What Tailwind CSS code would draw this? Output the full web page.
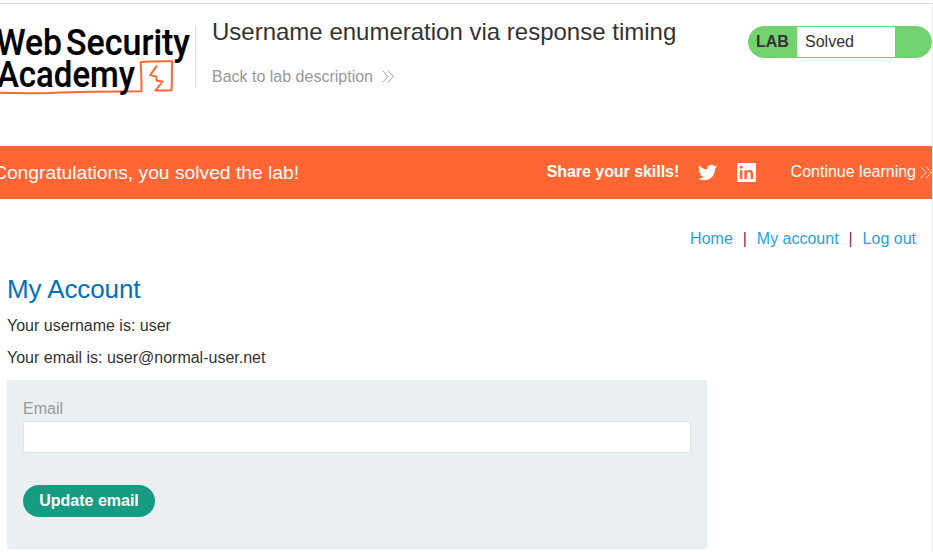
<!DOCTYPE html>
<html lang="en">
<head>
<meta charset="utf-8">
<title>Username enumeration via response timing</title>
<script src="https://cdn.jsdelivr.net/npm/@tailwindcss/browser@4"></script>
</head>
<body class="h-[552px] w-[933px] overflow-hidden bg-white pt-[3px] font-['Liberation_Sans',Arial,sans-serif] text-base text-[#333332]">
<div class="h-[549px] border-t border-r border-t-[#dedede] border-r-[#ececec]">
  <header class="flex h-[142px] items-start">
    <div class="mt-[22px] h-[62px] w-[196px] shrink-0 border-r border-[#dedede]">
      <svg class="overflow-visible" width="195" height="72" viewBox="0 26 195 72" role="img" aria-label="Web Security Academy">
        <path d="M-2 92.8C15 93.4 35 93.4 50 92.9C65 91.8 90 91.6 141.4 91.2C141.8 82 141.2 72 140.6 62.2C150 61.2 161 61.4 172.2 61.3C171.4 70 172.4 80 171.4 90.3C166 90.5 160 90.3 155.4 90.5L162.6 81.5L156.8 80.7L156.2 76.6L150.2 75.1L156.3 66.4" fill="none" stroke="#ff6633" stroke-width="2" stroke-linejoin="round" stroke-linecap="round"/>
        <g font-family="Roboto, sans-serif" font-size="37.8" font-weight="500" fill="#000" stroke="#000" stroke-width=".2">
          <text x="-4" y="54.7" textLength="66" lengthAdjust="spacingAndGlyphs">Web</text>
          <text x="66" y="54.7" textLength="124" lengthAdjust="spacingAndGlyphs">Security</text>
          <text x="-3" y="87" textLength="138" lengthAdjust="spacingAndGlyphs">Academy</text>
        </g>
      </svg>
    </div>
    <div class="ml-4 flex-1">
      <h2 class="mt-3 text-[24px] leading-8 whitespace-nowrap">Username enumeration via response timing</h2>
      <a class="mt-[17px] flex items-center text-base leading-6 text-[#999]">Back to lab description
        <svg class="-mt-0.5 ml-[9px]" width="12" height="13" viewBox="0 0 12 13" fill="none" stroke="#999" stroke-width=".9"><path d="M.7.7L6 6.5L.7 12.3M6 .7L11.3 6.5L6 12.3"/></svg>
      </a>
    </div>
    <div class="mt-[22px] flex h-8 w-[184px] shrink-0 overflow-hidden rounded-full border border-[#71d26e] bg-[#71d26e] leading-[30px]">
      <span class="w-12 pl-[7px] font-bold">LAB</span>
      <p class="w-[98px] bg-white pl-2">Solved</p>
    </div>
  </header>

  <section class="flex h-[53px] items-center bg-[#ff6633] whitespace-nowrap text-white">
    <h4 class="-ml-[7px] w-[554px] text-[19.26px] leading-6">Congratulations, you solved the lab!</h4>
    <span class="-mt-0.5 w-[151px] font-bold tracking-[-0.05px]">Share your skills!</span>
    <svg class="-mt-px w-[19px] shrink-0" height="19" viewBox="0 0 24 24" fill="#fff"><path d="M23.95 4.57a10 10 0 0 1-2.82.77 4.96 4.96 0 0 0 2.16-2.72c-.95.55-2 .96-3.13 1.18a4.92 4.92 0 0 0-8.38 4.48C7.69 8.1 4.07 6.13 1.64 3.16a4.92 4.92 0 0 0 1.52 6.57 4.9 4.9 0 0 1-2.23-.61v.06a4.93 4.93 0 0 0 3.95 4.83 5 5 0 0 1-2.21.08 4.94 4.94 0 0 0 4.6 3.42A9.87 9.87 0 0 1 0 19.54a13.99 13.99 0 0 0 7.55 2.21c9.05 0 14-7.5 14-13.98 0-.21 0-.42-.02-.63a9.94 9.94 0 0 0 2.46-2.55z"/></svg>
    <svg class="ml-5 shrink-0" width="19" height="19" viewBox="0 0 18 18"><path fill="#fff" d="M1 0H17Q18 0 18 1V17Q18 18 17 18H1Q0 18 0 17V1Q0 0 1 0Z"/><path fill="#ff6633" d="M2.8 6.8H5.1V15.2H2.8ZM7 6.8H9.2V8C9.9 7.1 10.8 6.6 12 6.6C14.4 6.6 15.2 8.1 15.2 10.5V15.2H12.9V10.9C12.9 9.6 12.5 8.6 11.3 8.6C9.9 8.6 9.4 9.6 9.4 10.9V15.2H7Z"/><circle cx="3.95" cy="4.1" r="1.4" fill="#ff6633"/></svg>
    <a class="-mt-0.5 ml-[35px]">Continue learning</a>
    <svg class="-mt-px ml-1 shrink-0" width="12" height="13" viewBox="0 0 12 13" fill="none" stroke="#fff" stroke-width=".9"><path d="M.7.7L6 6.5L.7 12.3M6 .7L11.3 6.5L6 12.3"/></svg>
  </section>

  <main class="pl-[7px]">
    <nav class="flex justify-end pt-7 pr-4 leading-6 text-[#29a3dd]">
      <a>Home</a><span class="w-6 text-center text-[#8a1f60]">|</span><a>My account</a><span class="w-6 text-center text-[#8a1f60]">|</span><a>Log out</a>
    </nav>
    <h1 class="mt-[22px] text-[26px] leading-8 tracking-[-0.1px] text-[#0071bc]">My Account</h1>
    <p class="mt-[9px] leading-6">Your username is: user</p>
    <p class="mt-2 leading-6">Your email is: user@normal-user.net</p>
    <form class="mt-[10px] flex h-[169px] w-[700px] flex-col items-start bg-[#eaeff1] px-4 pt-[17px]">
      <label class="leading-6 text-[#999]">Email</label>
      <input class="h-8 w-[668px] border border-[#e2e4e5] bg-white px-2" type="email">
      <button class="mt-8 h-8 w-[132px] rounded-full bg-[#169c80] pb-px font-bold text-white" type="button">Update email</button>
    </form>
  </main>
</div>
</body>
</html>
